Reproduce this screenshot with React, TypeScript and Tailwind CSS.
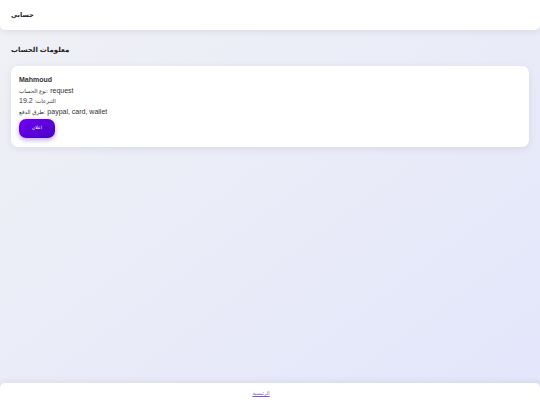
export default function App() {
  const rows = [
    { ar: "نوع الحساب", val: "request" },
    { ar: "التبرعات", val: "19.2" },
    { ar: "طرق الدفع", val: "paypal, card, wallet" },
  ];

  return (
    <div
      className="flex h-[405px] w-[540px] flex-col overflow-hidden bg-gradient-to-br from-[#f0f1f5] to-[#e3e6fb] text-[#222]"
      style={{ fontFamily: '"Liberation Sans", Arial, "DejaVu Sans", sans-serif' }}
    >
      <header className="flex h-[30px] shrink-0 items-center rounded-b-[5px] bg-white px-[11px] shadow-[0_2px_6px_rgba(0,0,0,0.08)]">
        <h1 className="text-[6.5px] font-bold">حسابي</h1>
      </header>

      <main className="flex-1 px-[11px] pt-[14px]">
        <h2 className="mb-[10px] h-[12px] text-[7px] leading-[12px] font-bold">معلومات الحساب</h2>

        <div className="rounded-[7px] bg-white px-[8px] pt-[9px] pb-[9px] shadow-[0_2px_8px_rgba(0,0,0,0.08)]">
          <p className="h-[10.5px] text-[7px] font-bold leading-[10.5px] text-[#333]">Mahmoud</p>
          {rows.map((r) => (
            <p key={r.ar} className="h-[10.8px] text-[7px] leading-[10.8px] text-[#333]">
              <span className="text-[5.5px]">{r.ar}:</span> {r.val}
            </p>
          ))}
          <button className="mt-[1px] block h-[19px] w-[36px] rounded-[7px] bg-gradient-to-br from-[#6f00f5] to-[#4a00c4] text-[4.5px] text-white shadow-[0_2px_5px_rgba(80,0,200,0.35)]">
            اعلان
          </button>
        </div>
      </main>

      <footer className="flex h-[22px] shrink-0 items-center justify-center rounded-t-[5px] bg-white pr-[18px] shadow-[0_-2px_6px_rgba(0,0,0,0.06)]">
        <a href="#" className="text-[5px] text-[#7a55d8] underline">
          الرئيسية
        </a>
      </footer>
    </div>
  );
}
